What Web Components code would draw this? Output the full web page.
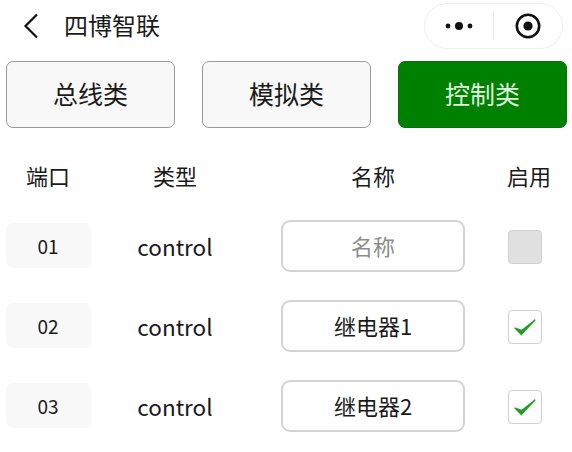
<!DOCTYPE html>
<html><head><meta charset="utf-8"><style>
html,body{margin:0;padding:0;background:#fff;overflow:hidden}
body{font-family:"Noto Sans CJK SC",sans-serif;color:#111;width:572px;height:452px}
</style></head><body>
<app-page></app-page>
<script>
const FONT='"Noto Sans CJK SC","Noto Sans",sans-serif';
class NavBar extends HTMLElement{constructor(){super();this.attachShadow({mode:'open'}).innerHTML=`<style>
:host{display:flex;align-items:center;height:52px;padding:0 9px 0 22px;font:24px/1 ${FONT};color:#1a1a1a}
svg{display:block}
.back{width:18px;height:26px;margin-right:24px}
.title{flex:1;padding-bottom:2px}
.cap{width:139px;height:46px;box-sizing:border-box;border:1px solid #eee;border-radius:23px;display:flex;align-items:center;background:#fff}
.cap>div{flex:1;display:flex;justify-content:center}
.sep{width:1px;height:28px;background:#e8e8e8;flex:none!important}
</style>
<svg class="back" viewBox="0 0 18 26"><path d="M15 1.5 3.5 13 15 24.5" fill="none" stroke="#111" stroke-width="2.2"/></svg>
<div class="title"><slot></slot></div>
<div class="cap"><div><svg width="28" height="10" viewBox="0 0 28 10"><circle cx="3" cy="5" r="2.4" fill="#111"/><circle cx="14" cy="5" r="4" fill="#111"/><circle cx="25" cy="5" r="2.4" fill="#111"/></svg></div><div class="sep"></div><div><svg width="28" height="28" viewBox="0 0 28 28"><circle cx="14" cy="14" r="11.2" fill="none" stroke="#111" stroke-width="2.6"/><circle cx="14" cy="14" r="4.6" fill="#111"/></svg></div></div>`}}
customElements.define('nav-bar',NavBar);
class TabButton extends HTMLElement{constructor(){super();this.attachShadow({mode:'open'}).innerHTML=`<style>
:host{display:flex;align-items:center;justify-content:center;box-sizing:border-box;height:67px;padding-bottom:2px;border:1.5px solid #999;border-radius:7px;background:#f8f8f8;color:#1a1a1a;font:25px/1 ${FONT}}
:host([active]){background:#008000;border-color:#0a6f0a;color:#dff3df}
</style><slot></slot>`}}
customElements.define('tab-button',TabButton);
class TabRow extends HTMLElement{constructor(){super();this.attachShadow({mode:'open'}).innerHTML=`<style>
:host{display:grid;grid-template-columns:repeat(3,169px);justify-content:space-between;margin:9px 5px 0 6px}
</style><slot></slot>`}}
customElements.define('tab-row',TabRow);
const cols='84px 170px 226px 78px';
class PortHead extends HTMLElement{constructor(){super();this.attachShadow({mode:'open'}).innerHTML=`<style>
:host{display:grid;grid-template-columns:84px 170px 226px 86px;height:63px;margin:15px 0 0 6px;align-items:center;justify-items:center;font:22px/1 ${FONT};color:#1a1a1a}
</style><span>端口</span><span>类型</span><span>名称</span><span>启用</span>`}}
customElements.define('port-head',PortHead);
class PortRow extends HTMLElement{constructor(){super();
const n=this.getAttribute('name')||'',on=this.hasAttribute('on');
this.attachShadow({mode:'open'}).innerHTML=`<style>
:host{display:grid;grid-template-columns:${cols};height:80px;margin-left:6px;align-items:center;justify-items:center;font:22.5px/1 ${FONT};color:#1a1a1a}
.port{width:85px;height:45px;margin-bottom:2px;background:#f8f8f8;border-radius:7px;display:flex;align-items:center;justify-content:center;font-size:19px}
.name{width:184px;height:52px;box-sizing:border-box;padding-bottom:2px;border:2px solid #d4d4d4;border-radius:9px;display:flex;align-items:center;justify-content:center;background:#fff;font-size:22px}
.ph{color:#8c8c8c}
.box{width:34px;height:34px;margin-top:2px;box-sizing:border-box;border:1.5px solid #d0d0d0;border-radius:4px;background:#fff;display:flex;align-items:center;justify-content:center}
.off{background:#e1e1e1}
</style>
<div class="port">${this.getAttribute('port')}</div><div>control</div>
<div class="name ${n?'':'ph'}">${n||'名称'}</div>
<div class="box ${on?'':'off'}">${on?'<svg width="22" height="18" viewBox="0 0 22 18"><path d="M1 10 7.3 16.5 21 2 7.6 12.4Z" fill="#1e9e28" stroke="#1e9e28" stroke-width="1.2" stroke-linejoin="round"/></svg>':''}</div>`}}
customElements.define('port-row',PortRow);
class AppPage extends HTMLElement{constructor(){super();this.attachShadow({mode:'open'}).innerHTML=`<style>:host{display:block}</style>
<nav-bar>四博智联</nav-bar>
<tab-row><tab-button>总线类</tab-button><tab-button>模拟类</tab-button><tab-button active>控制类</tab-button></tab-row>
<port-head></port-head>
<port-row port="01"></port-row>
<port-row port="02" name="继电器1" on></port-row>
<port-row port="03" name="继电器2" on></port-row>`}}
customElements.define('app-page',AppPage);
</script></body></html>
